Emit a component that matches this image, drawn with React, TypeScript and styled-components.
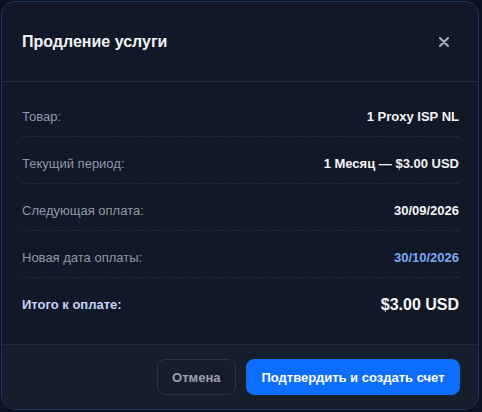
import React from 'react'
import styled, { createGlobalStyle } from 'styled-components'

const Global = createGlobalStyle`
  html, body {
    margin: 0;
    padding: 0;
    background: #0b1221;
    font-family: "Liberation Sans", Arial, sans-serif;
  }
`

const Modal = styled.div`
  box-sizing: border-box;
  width: 478px;
  height: 409px;
  margin: 1px 0 0 1px;
  background: #111827;
  border: 1px solid #1d3563;
  border-radius: 14px;
  overflow: hidden;
  display: flex;
  flex-direction: column;
`

const Header = styled.div`
  height: 79px;
  padding: 0 20px;
  display: flex;
  align-items: center;
  justify-content: space-between;
  border-bottom: 1px solid #242d3c;
`

const Title = styled.h2`
  margin: 0;
  font-size: 16px;
  font-weight: 700;
  color: #f3f4f6;
`

const Close = styled.button`
  width: 20px;
  height: 20px;
  padding: 0;
  margin-right: 4px;
  border: none;
  background: none;
  display: flex;
  align-items: center;
  justify-content: center;
  color: #a3abb8;
`

const Body = styled.div`
  flex: 1;
  padding: 16px 19px 0 20px;
  display: flex;
  flex-direction: column;
  gap: 8px;
`

const Row = styled.div<{ $last?: boolean }>`
  display: flex;
  justify-content: space-between;
  align-items: center;
  padding: 10px 0;
  line-height: 18px;
  font-size: 13px;
  border-bottom: ${(p) => (p.$last ? 'none' : '1px dashed #222b3a')};
`

const Label = styled.span<{ $strong?: boolean }>`
  color: ${(p) => (p.$strong ? '#c5d3f7' : '#8f98a6')};
  font-weight: ${(p) => (p.$strong ? 700 : 400)};
`

const Value = styled.span<{ $accent?: boolean; $big?: boolean }>`
  font-weight: 700;
  color: ${(p) => (p.$accent ? '#7ea6f4' : '#f3f4f6')};
  font-size: ${(p) => (p.$big ? '16px' : '13px')};
`

const Footer = styled.div`
  height: 65px;
  box-sizing: border-box;
  padding: 14px 18px 14px 20px;
  background: #161d2b;
  border-top: 1px solid #242d3c;
  display: flex;
  justify-content: flex-end;
  gap: 10px;
`

const Button = styled.button<{ $primary?: boolean }>`
  height: 36px;
  box-sizing: border-box;
  padding: 0 ${(p) => (p.$primary ? '14.5px' : '14.5px')};
  border-radius: 8px;
  font-family: inherit;
  font-size: 13px;
  font-weight: 700;
  border: 1px solid ${(p) => (p.$primary ? '#0d6efd' : '#2c3544')};
  background: ${(p) => (p.$primary ? '#0d6efd' : 'transparent')};
  color: ${(p) => (p.$primary ? '#ffffff' : '#9aa2af')};
`

export default function App() {
  return (
    <>
      <Global />
      <Modal>
        <Header>
          <Title>Продление услуги</Title>
          <Close aria-label="close">
            <svg width="10" height="10" viewBox="0 0 10 10">
              <path d="M1 1L9 9M9 1L1 9" stroke="currentColor" strokeWidth="2.2" strokeLinecap="round" />
            </svg>
          </Close>
        </Header>
        <Body>
          <Row>
            <Label>Товар:</Label>
            <Value>1 Proxy ISP NL</Value>
          </Row>
          <Row>
            <Label>Текущий период:</Label>
            <Value>1 Месяц — $3.00 USD</Value>
          </Row>
          <Row>
            <Label>Следующая оплата:</Label>
            <Value>30/09/2026</Value>
          </Row>
          <Row>
            <Label>Новая дата оплаты:</Label>
            <Value $accent>30/10/2026</Value>
          </Row>
          <Row $last>
            <Label $strong>Итого к оплате:</Label>
            <Value $big>$3.00 USD</Value>
          </Row>
        </Body>
        <Footer>
          <Button>Отмена</Button>
          <Button $primary>Подтвердить и создать счет</Button>
        </Footer>
      </Modal>
    </>
  )
}
